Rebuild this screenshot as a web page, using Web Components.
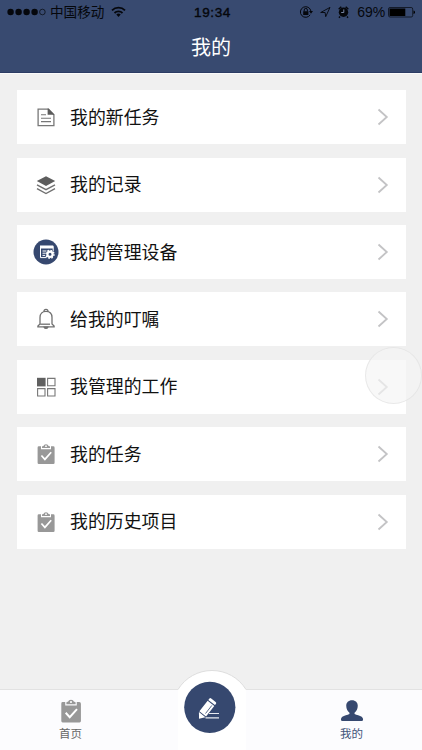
<!DOCTYPE html>
<html lang="zh-CN">
<head>
<meta charset="utf-8">
<title>我的</title>
<style>
html,body{margin:0;height:100%}
body{font-family:"Liberation Sans","Noto Sans CJK SC",sans-serif;background:#f0f0f0;overflow:hidden}
</style>
</head>
<body>
<app-screen>
  <status-bar slot="top" carrier="中国移动" time="19:34" battery="69%"></status-bar>
  <title-bar slot="top">我的</title-bar>
  <menu-row icon="doc">我的新任务</menu-row>
  <menu-row icon="layers">我的记录</menu-row>
  <menu-row icon="device">我的管理设备</menu-row>
  <menu-row icon="bell">给我的叮嘱</menu-row>
  <menu-row icon="grid">我管理的工作</menu-row>
  <menu-row icon="clip">我的任务</menu-row>
  <menu-row icon="clip">我的历史项目</menu-row>
  <tab-bar slot="bottom">
    <tab-item icon="clip">首页</tab-item>
    <compose-button></compose-button>
    <tab-item icon="person" active>我的</tab-item>
  </tab-bar>
  <touch-knob slot="overlay"></touch-knob>
</app-screen>
<script>
const icons = {
  doc: `<svg width="26" height="26" viewBox="0 0 26 26"><path d="M5.1 5.1h10.4l5.4 5.6v11H5.1z" fill="none" stroke="#777" stroke-width="1.3"/><path d="M14.6 4.5h.8l6.1 6.3h-6.9z" fill="#5b5b5b"/><path d="M8 10.8h5M8 14.2h10M8 17.6h10" stroke="#777" stroke-width="1.1"/></svg>`,
  layers: `<svg width="26" height="26" viewBox="0 0 26 26"><path d="M13 4.2l9.2 4.9-9.2 4.9-9.2-4.9z" fill="#5d5d5d"/><path d="M4 12.8l9 4.9 9-4.9M4 16.6l9 4.9 9-4.9" fill="none" stroke="#707070" stroke-width="1.4"/></svg>`,
  device: `<svg width="26" height="26" viewBox="0 0 26 26"><circle cx="13" cy="13" r="12.5" fill="#36486f"/><path d="M7.5 8v10.6h6M7 7.3h13.2v5" fill="none" stroke="#fff" stroke-width="1"/><path d="M7 6.6h13.2v2.9H7z" fill="#fff"/><path d="M9.5 12h4M9.5 14.2h2.5M9.5 16.4h2.5" stroke="#fff"/><circle cx="17" cy="15.3" r="2.6" fill="none" stroke="#fff" stroke-width="2.2"/><circle cx="17" cy="15.3" r="4" fill="none" stroke="#fff" stroke-width="1.4" stroke-dasharray="1.59 1.55"/></svg>`,
  bell: `<svg width="26" height="26" viewBox="0 0 26 26" fill="none" stroke="#707070" stroke-width="1.3"><path d="M11 5.3a2 2 0 0 1 4 0M7 18v-6.5C7 7.5 9.6 5.3 13 5.3s6 2.2 6 6.2V18l2.1 2v.8H4.9V20z"/><path d="M7.2 18.2H17"/><path d="M11.2 21.2a1.9 1.7 0 0 0 3.6 0z" fill="#707070"/></svg>`,
  grid: `<svg width="26" height="26" viewBox="0 0 26 26"><path d="M4 3.8h8.6v8.6H4z" fill="#606060"/><path d="M14.6 4.4h7.4v7.4h-7.4zM4.6 14.6H12V22H4.6zM14.6 14.6H22V22h-7.4z" fill="none" stroke="#777" stroke-width="1.1"/></svg>`,
  clip: `<svg width="100%" height="100%" viewBox="0 0 26 26"><path d="M5.8 5.3H8v2.9h10V5.3h2.2q1.4 0 1.4 1.4v15q0 1.2-1.2 1.2H5.8q-1.2 0-1.2-1.2V6.5q0-1.2 1.2-1.2z" fill="#989898"/><path d="M9 7.1V5.8q0-.9 1.2-.9h.2a2.7 2.2 0 0 1 5.2 0h.2q1.2 0 1.2.9v1.3z" fill="#989898"/><circle cx="13" cy="5.2" r=".9" fill="#fff"/><path d="M8.4 14.5l3.5 3.9 6.3-7.1" fill="none" stroke="#fff" stroke-width="1.7"/></svg>`,
  person: `<svg width="100%" height="100%" viewBox="0 0 26 26"><path d="M13 3.6c3.1 0 5 2 5 4.9 0 2.8-1.3 4.8-2.8 6v1c1.7 1 4.7 1.2 6.2 2.4.8.7 1.2 1.6 1.2 2.5q0 1.3-1.3 1.3H4.7q-1.3 0-1.3-1.3c0-.9.4-1.8 1.2-2.5 1.5-1.2 4.5-1.4 6.2-2.4v-1C9.300 13.300 8 11.300 8 8.500c0-2.900 1.900-4.900 5-4.900z" fill="#36486f"/></svg>`
};
const define = (name, render) => customElements.define(name, class extends HTMLElement {
  constructor(){ super(); this.attachShadow({mode:'open'}); }
  connectedCallback(){ this.shadowRoot.innerHTML = render(this); }
});

define('app-screen', () => `<style>
:host{display:flex;flex-direction:column;width:422px;height:750px;position:relative;background:#f0f0f0}
header{height:73px;box-sizing:border-box;background:#384a70;border-bottom:1px solid #2c3c64;flex:none}
main{flex:1;padding:16.3px 16px 0 17px;display:flex;flex-direction:column;gap:13.4px;border-top:1px solid #fafafa;margin-bottom:-1px}
</style><header><slot name="top"></slot></header><main><slot></slot></main><slot name="bottom"></slot><slot name="overlay"></slot>`);

define('status-bar', el => `<style>
:host{display:grid;grid-template-columns:1fr auto 1fr;align-items:center;height:24px;color:#05070c;font-size:13px;padding:0 7px}
.l,.r{display:flex;align-items:center}.r{justify-content:flex-end}
.c{font-size:13.6px;line-height:20px;margin:1px 7px 0 4px;white-space:nowrap}
.t{font-size:13.5px;letter-spacing:.6px;padding-left:3px;-webkit-text-stroke:.4px #05070c}
.b{font-size:14px;letter-spacing:-.1px;margin:0 3px 0 4px}
svg{display:block;flex:none}
</style>
<div class="l"><svg width="39" height="8" viewBox="0 0 39 8"><g fill="#05070c"><circle cx="3.6" cy="4" r="3.2"/><circle cx="11.6" cy="4" r="3.2"/><circle cx="19.6" cy="4" r="3.2"/><circle cx="27.600" cy="4" r="3.2"/></g><circle cx="35.4" cy="4" r="2.8" fill="none" stroke="#05070c" stroke-width=".7"/></svg>
<span class="c">${el.getAttribute('carrier')}</span>
<svg width="15" height="12" viewBox="0 0 15 12"><g fill="none" stroke="#05070c" stroke-width="1.8"><path d="M1 4.300a9.300 9.300 0 0 1 13 0M3.500 7a5.700 5.700 0 0 1 8 0"/></g><path d="M5.300 8.600a3.200 3.200 0 0 1 4.400 0L7.500 11z" fill="#05070c"/></svg></div>
<span class="t">${el.getAttribute('time')}</span>
<div class="r"><svg width="54" height="14" viewBox="0 0 54 14"><g fill="none" stroke="#05070c"><path d="M11.200 9.800A5.300 5.300 0 1 1 11.900 6" stroke-width="1"/><path d="M5.200 6.500V5a1.600 1.600 0 0 1 3.200 0v1.500"/><path d="M21.700 7.500L31 2.400l-4.300 9.300-.6-4.200z" stroke-width=".9" stroke-linejoin="round"/></g><path d="M4.200 6.300h5.200v3.800H4.200zM10 6h4l-2 2.700z" fill="#05070c"/><circle cx="44.500" cy="7.300" r="4.700" fill="#05070c"/><path d="M39.700 4.300l2.600-2.500M49.300 4.300l-2.600-2.500M41 11.500l-1 1.200M48 11.500l1 1.200" stroke="#05070c" stroke-width="1.500"/><path d="M44.800 4.400v3.100h-2.600" stroke="#7785a4" fill="none"/></svg>
<span class="b">${el.getAttribute('battery')}</span>
<svg width="27" height="11" viewBox="0 0 27 11"><rect x=".5" y=".5" width="24.2" height="9.500" rx="1.500" fill="none" stroke="#05070c" stroke-width=".7"/><path d="M1.500 1.500h15.800V9H1.500z"/><path d="M25.500 3.500q1.500.2 1.500 1.800T25.500 7.100z"/></svg></div>`);

define('title-bar', () => `<style>:host{display:block;text-align:center;color:#fff;font-size:20px;line-height:49px;height:48px}</style><slot></slot>`);

define('menu-row', el => `<style>
:host{display:flex;align-items:center;height:54px;flex:none;box-sizing:border-box;padding:0 17px 0 16px;background:#fff;color:#111;font-size:17.9px;line-height:26px}
.i{width:26px;height:26px;margin-right:11px}.i svg{display:block}
.n{flex:1;padding-top:1px}
</style><span class="i">${icons[el.getAttribute('icon')]}</span><span class="n"><slot></slot></span><svg width="13" height="18" viewBox="0 0 13 18"><path d="M2.500 1.500l8.300 7.500-8.300 7.500" fill="none" stroke="#c3c3c5" stroke-width="1.800"/></svg>`);

define('tab-bar', () => `<style>
:host{display:grid;grid-template-columns:141px 1fr 141px;height:61px;box-sizing:border-box;border-top:1px solid #e2e2e2;background:#fcfcfe;flex:none;position:relative}
</style><slot></slot>`);

define('tab-item', el => `<style>
:host{display:flex;flex-direction:column;align-items:center;padding-top:6px;font-size:11.500px;line-height:16px;color:${el.hasAttribute('active')?'#44557b':'#666'}}
.i{width:30px;height:30px}.i svg{display:block}
</style><span class="i">${icons[el.getAttribute('icon')]}</span><slot></slot>`);

define('compose-button', () => `<style>
:host{display:block;position:relative}
svg{position:absolute;left:36px;top:-21px}
</style><svg width="70" height="81" viewBox="0 0 70 81"><path d="M1 81V20.500A39.900 39.900 0 0 1 69 20.500V81z" fill="#fff"/><path d="M1 20.500A39.900 39.900 0 0 1 69 20.500" fill="none" stroke="#dedede"/><circle cx="32.800" cy="38.300" r="25.600" fill="#36486f"/>
<g transform="translate(22 49.700) rotate(-52) scale(1.080)"><path d="M0 0l4.800-3.800v7.600z" fill="#fff"/><path d="M5.600-3.900H18v7.800H5.600zM19-3.900h1.400q1.300 0 1.300 1.300v5.200q0 1.300-1.300 1.300H19z" fill="#fff"/><path d="M7.500 1.800H17" stroke="#36486f" stroke-width=".7"/></g>
<path d="M32 44.500h10M28.500 48.900H42" stroke="#e8eaf0" stroke-width="1.200"/></svg>`);

define('touch-knob', () => `<style>
:host{position:absolute;left:365px;top:347px;width:57px;height:57px;box-sizing:border-box;border-radius:50%;background:rgba(244,244,244,.68);border:1px solid rgba(222,222,222,.6)}
</style>`);
</script>
</body>
</html>
